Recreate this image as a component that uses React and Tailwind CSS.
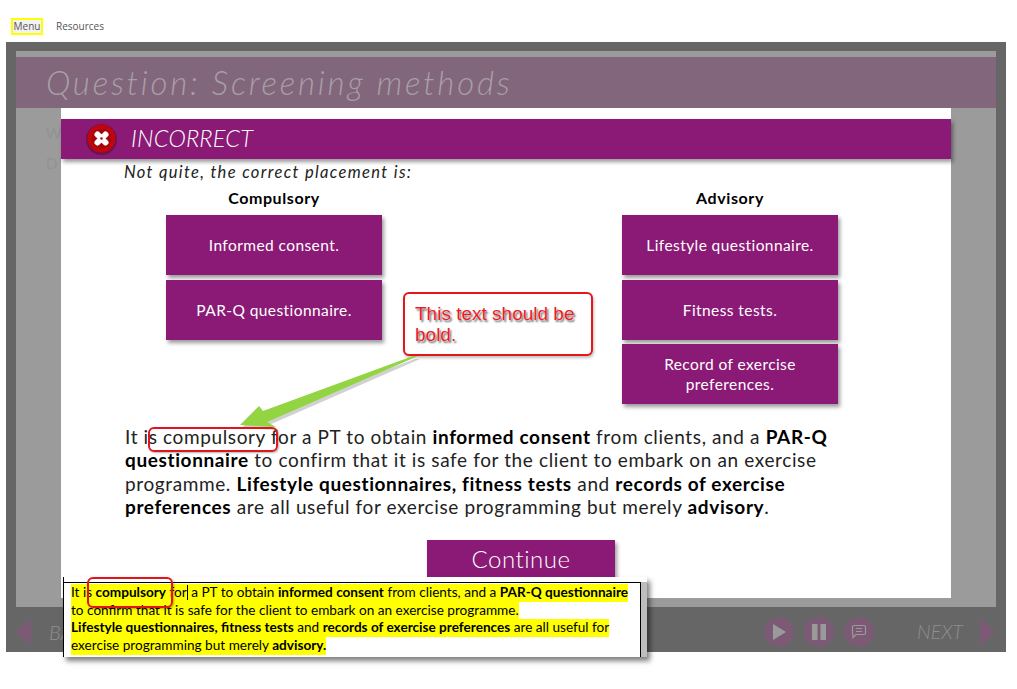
const gothic = { fontFamily: '"Lato", "Open Sans", sans-serif' };

function Box({ children }) {
  return (
    <div className="w-[216px] h-[60px] bg-[#8a1a75] shadow-[2px_3px_4px_rgba(0,0,0,0.4)] flex items-center justify-center text-center text-white text-[15.5px] leading-[20px] tracking-[0.42px] px-2">
      <span>{children}</span>
    </div>
  );
}

function RoundBtn({ children }) {
  return (
    <div className="w-[30px] h-[30px] rounded-full bg-[#7c5a76] flex items-center justify-center">
      {children}
    </div>
  );
}

function Mark({ children }) {
  return <div className="w-fit h-[17.7px] bg-[#ffff00] whitespace-nowrap">{children}</div>;
}

export default function App() {
  return (
    <div className="relative w-[1017px] h-[689px] bg-white overflow-hidden" style={gothic}>
      {/* Top menu */}
      <div className="h-[42px] pl-[11px] pt-[18px] flex items-start gap-[13px] text-[10px] text-[#555]" style={{ fontFamily: '"Open Sans", sans-serif' }}>
        <span className="w-[32px] h-[17px] text-center border-[2px] border-[#ffff00] leading-[13px] bg-[#f2f2f2]">Menu</span>
        <span className="leading-[17px]">Resources</span>
      </div>

      {/* Player frame */}
      <div className="ml-[6px] w-[1000px] h-[610px] bg-[#666666] pt-[9px] px-[10px] flex flex-col">
        <div className="h-[556px] bg-[#9b9b9b] pt-[6px] flex flex-col">
          <div className="h-[51px] shrink-0 bg-[#82667c] pl-[30px] flex items-center text-[33px] italic font-light tracking-[2.8px] text-[#a89fa6]">
            Question: Screening methods
          </div>
          <div className="flex">
            {/* Slide text showing behind the dimmed layer */}
            <div className="w-[45px] shrink-0 pl-[30px] pt-[10px] text-[15px] leading-[30px] text-[#929292]">
              <div>W</div>
              <div>D</div>
            </div>
            {/* Modal */}
            <div className="w-[890px] h-[490px] bg-white pt-[11px] flex flex-col">
              <div className="h-[40px] shrink-0 bg-[#8a1a75] shadow-[2px_3px_4px_rgba(0,0,0,0.4)] pl-[25px] flex items-center gap-[13px] text-white italic font-light text-[23.5px] tracking-[0.2px]">
                <svg width="32" height="32" viewBox="0 0 32 32" className="shrink-0">
                  <circle cx="15.5" cy="16.5" r="15.5" fill="#4a1030" opacity="0.55" />
                  <circle cx="15.5" cy="15.5" r="14" fill="#c0060c" />
                  <circle cx="15.5" cy="15.5" r="10" fill="#a5060b" />
                  <path d="M11.5 11.5l8 8M19.5 11.5l-8 8" stroke="#fff" strokeWidth="6" strokeLinecap="round" />
                  <circle cx="15.5" cy="15.5" r="1.3" fill="#c0060c" />
                </svg>
                <span>INCORRECT</span>
              </div>
              <div className="pl-[63px] pt-[3px] text-[16.5px] leading-[20px] italic text-[#222] tracking-[1.35px]">
                Not quite, the correct placement is:
              </div>
              {/* Columns */}
              <div className="pl-[105px] pt-[6px] flex gap-[240px]">
                <div className="w-[216px] flex flex-col">
                  <div className="h-[27px] text-center font-bold text-[16px] leading-[20px] text-black tracking-[0.6px]">Compulsory</div>
                  <div className="flex flex-col gap-[5px]">
                    <Box>Informed consent.</Box>
                    <Box>PAR-Q questionnaire.</Box>
                  </div>
                </div>
                <div className="w-[216px] flex flex-col">
                  <div className="h-[27px] text-center font-bold text-[16px] leading-[20px] text-black tracking-[0.6px]">Advisory</div>
                  <div className="flex flex-col gap-[5px]">
                    <Box>Lifestyle questionnaire.</Box>
                    <Box>Fitness tests.</Box>
                    <div className="-mt-px"><Box>Record of exercise<br />preferences.</Box></div>
                  </div>
                </div>
              </div>
              {/* Explanation */}
              <p className="ml-[64px] w-[720px] mt-[21px] text-[19px] leading-[23.3px] text-[#222] tracking-[0.62px] whitespace-nowrap">
                It is compulsory for a PT to obtain <b className="text-black">informed consent</b> from clients, and a <b className="text-black">PAR-Q</b><br />
                <b className="text-black">questionnaire</b> to confirm that it is safe for the client to embark on an exercise<br />
                programme. <b className="text-black">Lifestyle questionnaires, fitness tests</b> and <b className="text-black">records of exercise</b><br />
                <b className="text-black">preferences</b> are all useful for exercise programming but merely <b className="text-black">advisory</b>.
              </p>
              <div className="ml-[366px] mt-[22px] w-[188px] h-[50px] bg-[#8a1a75] shadow-[2px_3px_4px_rgba(0,0,0,0.4)] flex justify-center pt-[3px] text-white text-[24px] font-light tracking-[0.5px] leading-[32px]">
                Continue
              </div>
            </div>
          </div>
        </div>
        {/* Player controls */}
        <div className="h-[45px] pt-[5px] flex items-center pr-[1px]">
          <div className="w-0 h-0 border-y-[14px] border-y-transparent border-r-[15px] border-r-[#7c5a76]" />
          <span className="ml-[18px] text-[20px] italic font-light text-[#8f8f8f]">BACK</span>
          <div className="ml-auto flex items-center gap-[10px] mr-[43px]">
            <RoundBtn>
              <svg width="14" height="16" viewBox="0 0 14 16"><path d="M1 0l13 8-13 8z" fill="#9a9a9a" /></svg>
            </RoundBtn>
            <RoundBtn>
              <svg width="14" height="16" viewBox="0 0 14 16"><path d="M0 0h5.5v16H0zM8.5 0H14v16H8.500z" fill="#9a9a9a" /></svg>
            </RoundBtn>
            <RoundBtn>
              <svg width="16" height="16" viewBox="0 0 16 16" fill="none" stroke="#9a9a9a" strokeWidth="1.2"><path d="M3 1.500h10a1.500 1.500 0 0 1 1.500 1.500v6A1.500 1.500 0 0 1 13 10.500H5L2 13.500V10.500A1.500 1.500 0 0 1 1.500 9V3A1.500 1.500 0 0 1 3 1.500z" /><path d="M5 4.500h6M5 7.500h6" /></svg>
            </RoundBtn>
          </div>
          <span className="text-[19.5px] italic font-light text-[#8f8f8f] mr-[17px]">NEXT</span>
          <div className="w-0 h-0 border-y-[14px] border-y-transparent border-l-[15px] border-l-[#7c5a76]" />
        </div>
      </div>

      {/* Annotation: callout */}
      <div className="absolute left-[403px] top-[292px] w-[190px] h-[64px] rounded-[6px] border-2 border-[#e8141c] bg-white shadow-[1px_2px_3px_rgba(0,0,0,0.25)] pl-[10px] pt-[9px] text-[19px] leading-[21px] text-[#ec1c24] [text-shadow:0_0_1px_#fff,1.500px_1.500px_2px_rgba(0,0,0,0.6)]" style={{ fontFamily: '"Liberation Sans", sans-serif' }}>
        This text should be bold.
      </div>
      {/* Annotation: arrow */}
      <svg className="absolute left-[230px] top-[350px]" width="200" height="85" viewBox="0 0 200 85">
        <polygon points="183,6 33,61 29,56 10,75 46,77 37,72 188,6" fill="#000" opacity="0.18" transform="translate(2,3)" />
        <polygon points="183,6 33,61 29,56 10,75 46,77 37,72 188,6" fill="#92d441" />
      </svg>
      {/* Annotation: highlight on the slide */}
      <div className="absolute left-[148px] top-[427px] w-[130px] h-[25px] rounded-[6px] border-2 border-[#e2141c] shadow-[1px_1px_2px_rgba(0,0,0,0.3)]" />

      {/* Annotation: document excerpt */}
      <div className="absolute left-[63px] top-[577px] w-[584px] h-[80px] bg-white shadow-[3px_4px_5px_rgba(0,0,0,0.5)] flex flex-col">
        <div className="h-[5px] shrink-0 border-l border-black" />
        <div className="flex h-[75px]">
          <div className="flex-1 border-t border-l border-r border-black pl-[7px] pt-[1px] text-[13.6px] leading-[17.7px] text-black" style={{ fontFamily: '"Lato", sans-serif' }}>
            <Mark>It is <b>compulsory</b> for<span className="inline-block w-px h-[15px] bg-black align-text-bottom" /> a PT to obtain <b>informed consent</b> from clients, and a <b>PAR-Q questionnaire</b></Mark>
            <Mark>to confirm that it is safe for the client to embark on an exercise programme.</Mark>
            <Mark><b>Lifestyle questionnaires, fitness tests</b> and <b>records of exercise preferences</b> are all useful for</Mark>
            <Mark>exercise programming but merely <b>advisory.</b></Mark>
          </div>
          <div className="w-[6px] bg-[#bdbdbd]" />
        </div>
      </div>
      <div className="absolute left-[87px] top-[577px] w-[86px] h-[31px] rounded-[6px] border-2 border-[#e2141c] shadow-[1px_1px_2px_rgba(0,0,0,0.3)]" />
    </div>
  );
}
